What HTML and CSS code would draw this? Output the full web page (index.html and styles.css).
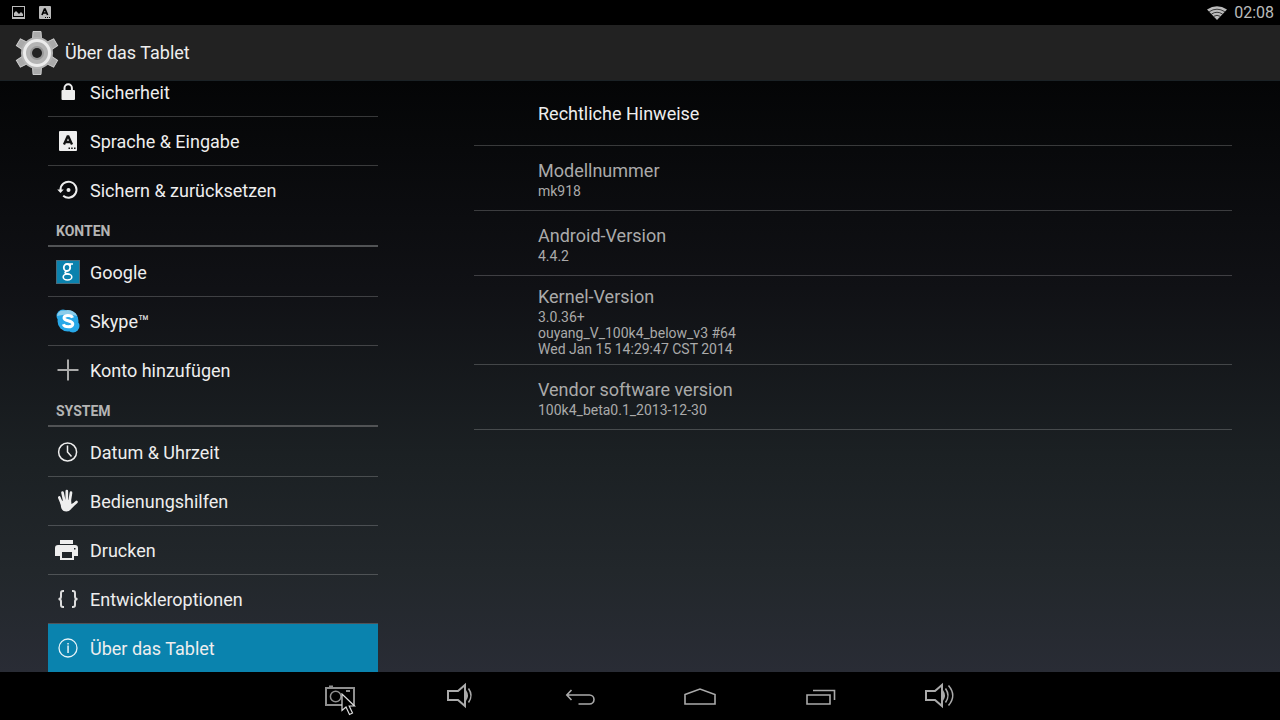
FILE: index.html
```
<!DOCTYPE html>
<html lang="de">
<head>
    <meta charset="UTF-8">
    <meta name="viewport" content="width=device-width, initial-scale=1.0">
    <title>Über das Tablet</title>
    <link rel="stylesheet" href="styles.css">
</head>
<body>
<div class="status-bar">
    <div class="notifications">
        <svg class="status-icon" viewBox="0 0 14 14">
            <path fill="#bbb" fill-rule="evenodd" d="M0 0h13v13H0zM1 1v10h11V1z"/>
            <path fill="#bbb" d="M2 10V7l2-2 2 2 1 1 2-2 2 2v2z"/>
        </svg>
        <svg class="status-icon" viewBox="0 0 14 14">
            <rect x="1" width="12" height="13" rx="1" fill="#bbb"/>
            <path fill="none" stroke="#000" stroke-width="1.7" d="M4 9 6.5 3h.6L9.600 9M5 7h4"/>
            <path fill="#000" d="M7 11h1v1H7zM9 11h1v1H9zM11 11h1v1h-1z"/>
        </svg>
    </div>
    <div class="system-info">
        <svg class="wifi" viewBox="0 0 20 14">
            <path fill="#bbb" d="M10 14 0 3.500Q10-3 20 3.500z"/>
            <path fill="none" stroke="#000" stroke-width=".7" d="M2.200 5.700q7.800-5 15.600 0M4.500 8q5.500-3.500 11 0M6.800 10.300q3.200-2 6.400 0"/>
        </svg>
        <span class="clock">02:08</span>
    </div>
</div>

<header class="action-bar">
    <svg class="gear" viewBox="-22 -22 44 44">
        <g fill="#aaa" stroke="#ccc" stroke-width="1">
            <path d="M-4-21.500h8l.5 8v27l-.5 8h-8l-.5-8v-27z"/>
            <path d="M-4-21.500h8l.5 8v27l-.5 8h-8l-.5-8v-27z" transform="rotate(60)"/>
            <path d="M-4-21.500h8l.5 8v27l-.5 8h-8l-.5-8v-27z" transform="rotate(120)"/>
        </g>
        <circle r="16" fill="#b4b4b4"/>
        <circle r="12.500" fill="#b4b4b4" stroke="#ececec" stroke-width="3"/>
        <circle r="7" fill="#999"/>
        <circle r="5" fill="#222"/>
    </svg>
    <h1>Über das Tablet</h1>
</header>

<main class="content">
    <nav class="sidebar">
        <a href="#" class="item">
            <svg class="icon" viewBox="0 0 24 24">
                <rect x="5.500" y="10" width="13.500" height="10" rx="1" fill="#eee"/>
                <path fill="none" stroke="#eee" stroke-width="2" d="M8.500 11V8a3.700 3.700 0 0 1 7.400 0v3"/>
            </svg>
            Sicherheit
        </a>
        <a href="#" class="item">
            <svg class="icon" viewBox="0 0 24 24">
                <rect x="3" y="2" width="18" height="20" rx="1" fill="#eee"/>
                <path fill="none" stroke="#111" stroke-width="2.300" d="M8 15.500 11.600 7.500h.8L16 15.500M9.500 13h5"/>
                <path fill="#111" d="M12.500 18.500H14V20h-1.500zM15.200 18.500h1.500V20h-1.500zM18 18.500h1.500V20H18z"/>
            </svg>
            Sprache &amp; Eingabe
        </a>
        <a href="#" class="item">
            <svg class="icon" viewBox="0 0 24 24">
                <path fill="none" stroke="#eee" stroke-width="2" d="M4.500 12a8 8 0 1 1 2.700 5.700"/>
                <path fill="#eee" d="M1.200 11.500h6.600L4.500 15z"/>
                <circle cx="12.500" cy="12" r="2" fill="#eee"/>
            </svg>
            Sichern &amp; zurücksetzen
        </a>

        <h2>Konten</h2>
        <a href="#" class="item">
            <svg class="icon" viewBox="0 0 24 24">
                <rect x=".5" y=".5" width="23" height="23" fill="#0b82ae" stroke="#4a6b7a"/>
                <!-- two-storey g -->
                <g fill="none" stroke="#fff">
                    <ellipse cx="11" cy="7.500" rx="3.200" ry="3.500" stroke-width="1.800"/>
                    <ellipse cx="11.500" cy="17" rx="4.300" ry="3" stroke-width="1.600"/>
                    <path stroke-width="1.600" d="M11 4h6M13.500 4.500l1.200 1.500M10.500 11q-3 2 0 2.500l3 1"/>
                </g>
            </svg>
            Google
        </a>
        <a href="#" class="item">
            <svg class="icon" viewBox="0 0 24 24">
                <circle cx="7" cy="7" r="6.500" fill="#28a8e8"/>
                <circle cx="17" cy="17" r="6.500" fill="#28a8e8"/>
                <circle cx="12" cy="12" r="10.500" fill="#28a8e8"/>
                <path fill="#8ccdeb" d="M1 7q1-6 7-5.500Q17-.5 21.500 7 12 4 1 7z"/>
                <path fill="none" stroke="#fff" stroke-width="3" d="M16.500 8.800C15.500 6 8 5.600 8 9c0 3.500 8.800 2 8.800 6 0 3.800-8.300 3.500-9.500.2"/>
            </svg>
            Skype™
        </a>
        <a href="#" class="item">
            <svg class="icon" viewBox="0 0 24 24">
                <path fill="none" stroke="#aaa" stroke-width="2" d="M12 1.500v21M1.500 12h21"/>
            </svg>
            Konto hinzufügen
        </a>

        <h2>System</h2>
        <a href="#" class="item">
            <svg class="icon" viewBox="0 0 24 24">
                <circle cx="11.600" cy="12" r="9" fill="none" stroke="#eee" stroke-width="1.500"/>
                <path fill="none" stroke="#eee" stroke-width="1.500" d="M11.500 5.500V12l4 4.500"/>
            </svg>
            Datum &amp; Uhrzeit
        </a>
        <a href="#" class="item">
            <svg class="icon" viewBox="0 0 24 24">
                <path fill="none" stroke="#eee" stroke-width="2.700" stroke-linecap="round" d="M3.300 8.500 6 15M6.500 3.500 8.500 13M10.800 2.200V12M15 3.700 13.500 13M15.500 17.500l5-4.500"/>
                <path fill="#eee" d="M4.300 12 15 10.500l.5 4.500 3.500-1.500q-1 4-4 6.800-2 2.200-4.500 2.200Q6 22.500 5 18z"/>
            </svg>
            Bedienungshilfen
        </a>
        <a href="#" class="item">
            <svg class="icon" viewBox="0 0 24 24">
                <path fill="#eee" d="M4 2h13v4H4z"/>
                <path fill="#eee" fill-rule="evenodd" d="M2 7h17q3 0 3 3v8h-4v4H4v-4H-1v-8q0-3 3-3zM6 14v6h10v-6zM18 10v1.500h1.500V10z"/>
            </svg>
            Drucken
        </a>
        <a href="#" class="item">
            <svg class="icon" viewBox="0 0 24 24">
                <path fill="none" stroke="#ddd" stroke-width="2" d="M8 4H7Q5 4 5 6v3.500Q5 12 2.500 12 5 12 5 14.500V18q0 2 2 2h1M16 4h1q2 0 2 2v3.500Q19 12 21.500 12 19 12 19 14.500V18q0 2-2 2h-1"/>
            </svg>
            Entwickleroptionen
        </a>
        <a href="#" class="item selected">
            <svg class="icon" viewBox="0 0 24 24">
                <circle cx="12" cy="12" r="9" fill="none" stroke="#e6f3f8" stroke-width="1.300"/>
                <path fill="#e6f3f8" d="M11.300 7h1.500v1.500h-1.500zM11.300 9.500h1.500V17h-1.500z"/>
            </svg>
            Über das Tablet
        </a>
    </nav>

    <section class="details">
        <a href="#" class="entry enabled"><span class="title">Rechtliche Hinweise</span></a>
        <div class="entry">
            <span class="title">Modellnummer</span>
            <span class="summary">mk918</span>
        </div>
        <div class="entry">
            <span class="title">Android-Version</span>
            <span class="summary">4.4.2</span>
        </div>
        <div class="entry">
            <span class="title">Kernel-Version</span>
            <span class="summary">3.0.36+<br>ouyang_V_100k4_below_v3 #64<br>Wed Jan 15 14:29:47 CST 2014</span>
        </div>
        <div class="entry">
            <span class="title">Vendor software version</span>
            <span class="summary">100k4_beta0.1_2013-12-30</span>
        </div>
    </section>
</main>

<footer class="nav-bar">
    <button type="button" aria-label="Screenshot">
        <svg viewBox="0 0 48 48">
            <path fill="none" stroke="#8f8f8f" stroke-width="2" d="M10 16h28v17H10zM13 14.500h4M30 19h4"/>
            <circle cx="19.700" cy="24.500" r="5.300" fill="none" stroke="#8f8f8f" stroke-width="1.500"/>
        </svg>
        <svg class="pointer" viewBox="0 0 16 24">
            <path fill="#000" stroke="#ddd" stroke-width="1.200" d="M1 1v16.500l4-3.500 3.500 7.500 3-1.500-3.300-7H13.500z"/>
        </svg>
    </button>
    <button type="button" aria-label="Leiser">
        <svg viewBox="0 0 48 48">
            <path fill="none" stroke="#aaa" stroke-width="2" d="M12 19h10l7-6v21l-7-6H12z"/>
            <path fill="#aaa" d="M30 18q4 5.500 0 11z"/>
            <path fill="none" stroke="#aaa" stroke-width="1.500" d="M32.500 16.500q5 7 0 14"/>
        </svg>
    </button>
    <button type="button" aria-label="Zurück">
        <svg viewBox="0 0 48 48">
            <path fill="none" stroke="#aaa" stroke-width="1.600" d="M15.500 18 10.800 23l4.700 5M11 23h22.500a4.300 4.300 0 0 1 0 9H22.500"/>
        </svg>
    </button>
    <button type="button" aria-label="Startseite">
        <svg viewBox="0 0 48 48">
            <path fill="none" stroke="#aaa" stroke-width="1.600" d="M9 22.500 24 17l15 5.500V32H9z"/>
        </svg>
    </button>
    <button type="button" aria-label="Letzte Apps">
        <svg viewBox="0 0 48 48">
            <path fill="none" stroke="#aaa" stroke-width="1.600" d="M11 23h23v9H11zM17 18.500h21.500V28"/>
        </svg>
    </button>
    <button type="button" aria-label="Lauter">
        <svg viewBox="0 0 48 48">
            <path fill="none" stroke="#aaa" stroke-width="2" d="M10 19h9l7-6v21l-7-6h-9z"/>
            <path fill="#aaa" d="M27 18q4 5.500 0 11z"/>
            <path fill="none" stroke="#aaa" stroke-width="1.500" d="M29.500 16.500q5 7 0 14M32.500 13.500q8.500 10 0 20"/>
        </svg>
    </button>
</footer>
</body>
</html>
```
FILE: styles.css
```
body {
    display: flex;
    flex-direction: column;
    height: 100vh;
    margin: 0;
    font-family: Roboto, sans-serif;
    font-size: 18px;
    color: #eee;
    background-color: #000;
}

a {
    color: inherit;
    text-decoration: none;
}

.status-bar {
    display: flex;
    justify-content: space-between;
    align-items: center;
    height: 25px;
    padding: 0 6px 0 12px;
}

.notifications,
.system-info {
    display: flex;
    align-items: center;
}

.notifications {
    gap: 12px;
}

.system-info {
    gap: 7px;
}

.status-icon {
    width: 14px;
    height: 14px;
}

.wifi {
    width: 20px;
    height: 14px;
}

.clock {
    font-size: 16px;
    color: #bbb;
}

.action-bar {
    display: flex;
    align-items: center;
    gap: 6px;
    height: 55px;
    padding-left: 15px;
    background-color: #222;
    border-bottom: 1px solid #1b2226;
}

.gear {
    width: 44px;
    height: 44px;
}

h1 {
    margin: 0;
    font-size: 18px;
    font-weight: 400;
    line-height: 24px;
}

.content {
    flex: 1;
    min-height: 0;
    display: grid;
    grid-template-columns: 330px 1fr;
    gap: 96px;
    padding: 0 48px;
    background: linear-gradient(#040506, #101115 35%, #1b2023 63%, #22272b 83%, #292c35);
}

/* list is scrolled to its end, the first row is cut off at the top */
.sidebar {
    display: flex;
    flex-direction: column;
    justify-content: flex-end;
    min-height: 0;
    overflow: hidden;
}

.item {
    display: flex;
    flex-shrink: 0;
    align-items: center;
    gap: 10px;
    height: 48px;
    padding-left: 8px;
    border-bottom: 1px solid rgba(255, 255, 255, 0.2);
}

.item:has(+ h2) {
    border-color: transparent;
}

.item.selected {
    background-color: #0a83ae;
    border-bottom: none;
}

.icon {
    width: 24px;
    height: 24px;
    overflow: visible;
}

h2 {
    flex-shrink: 0;
    margin: 0 0 1px;
    padding: 2px 0 0 8px;
    font-size: 14px;
    line-height: 28px;
    text-transform: uppercase;
    color: #b4b4b4;
    border-bottom: 2px solid #515355;
}

.details {
    display: flex;
    flex-direction: column;
}

.entry {
    display: flex;
    flex-direction: column;
    justify-content: center;
    box-sizing: border-box;
    min-height: 65px;
    padding: 8px 64px 7px;
    color: #aaa;
    border-bottom: 1px solid rgba(255, 255, 255, 0.2);
}

.entry.enabled {
    color: #eee;
}

.title {
    line-height: 25px;
}

.summary {
    font-size: 14px;
    line-height: 16px;
}

.nav-bar {
    display: flex;
    justify-content: center;
    height: 48px;
}

.nav-bar button {
    position: relative;
    width: 120px;
    padding: 0;
    background: none;
    border: none;
}

.nav-bar svg {
    width: 48px;
    height: 48px;
}

.nav-bar .pointer {
    position: absolute;
    top: 21px;
    left: 61px;
    width: 16px;
    height: 24px;
}
```
